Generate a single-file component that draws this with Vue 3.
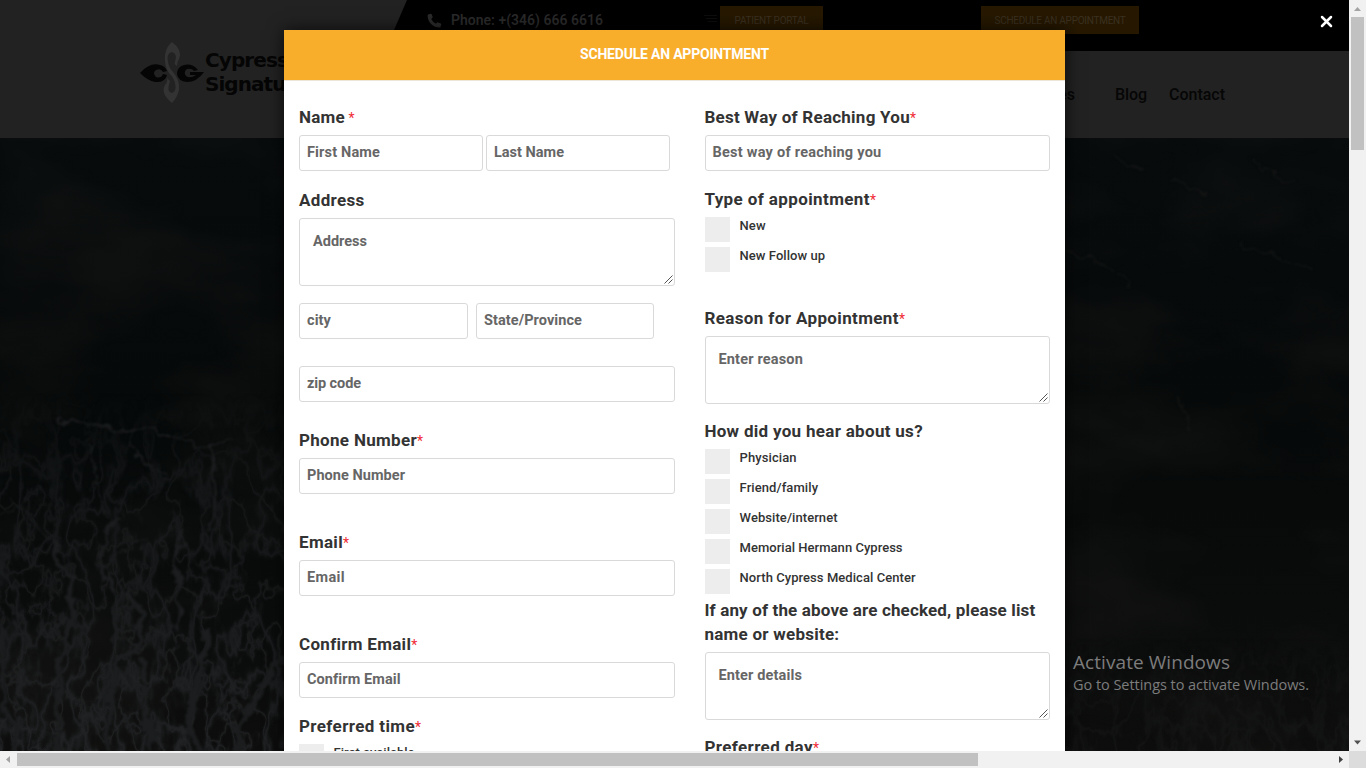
<script setup>
// Adjusts tracking so a text run spans the requested width in pixels.
const vFit = {
  mounted(el, { value }) {
    if (!value) return
    const n = [...el.textContent].length
    const w = el.getBoundingClientRect().width
    el.style.letterSpacing = `${(value - w) / n}px`
  },
}

const left = [
  { id: 'name', label: 'Name', w: 46, req: true, spaced: true, rows: [[{ t: 'First Name', w: 73, box: 'w184' }, { t: 'Last Name', w: 70, box: 'w184' }]] },
  { id: 'address', label: 'Address', w: 65.5, area: { t: 'Address', w: 54 } },
  { id: 'place', rows: [[{ t: 'city', w: 24, box: 'w169' }, { t: 'State/Province', w: 98, box: 'w178' }]] },
  { id: 'zip', rows: [[{ t: 'zip code', w: 54, box: 'full' }]] },
  { id: 'phone', label: 'Phone Number', w: 118, req: true, rows: [[{ t: 'Phone Number', w: 98, box: 'full' }]] },
  { id: 'email', label: 'Email', w: 44, req: true, rows: [[{ t: 'Email', w: 38, box: 'full' }]] },
  { id: 'confirm', label: 'Confirm Email', w: 112, req: true, rows: [[{ t: 'Confirm Email', w: 93.5, box: 'full' }]] },
  { id: 'time', label: 'Preferred time', w: 116, req: true, checks: [{ t: 'First available', w: 81 }] },
]
const right = [
  { id: 'reach', label: 'Best Way of Reaching You', w: 205.5, req: true, rows: [[{ t: 'Best way of reaching you', w: 169, box: 'full' }]] },
  { id: 'type', label: 'Type of appointment', w: 165.5, req: true, checks: [{ t: 'New', w: 26 }, { t: 'New Follow up', w: 85.5 }] },
  { id: 'reason', label: 'Reason for Appointment', w: 194.5, req: true, area: { t: 'Enter reason', w: 84.5 } },
  {
    id: 'hear', label: 'How did you hear about us?', w: 218.5,
    checks: [{ t: 'Physician', w: 57 }, { t: 'Friend/family', w: 78.5 }, { t: 'Website/internet', w: 98 }, { t: 'Memorial Hermann Cypress', w: 163 }, { t: 'North Cypress Medical Center', w: 176 }],
  },
  { id: 'details', label: 'If any of the above are checked, please list', w: 331, label2: 'name or website:', w2: 135, area: { t: 'Enter details', w: 83.5 } },
  { id: 'day', label: 'Preferred day', w: 108.5, req: true },
]
</script>

<template>
  <div class="window">
    <div class="page">
      <header class="header">
        <svg class="topbar" width="1349" height="51" viewBox="0 0 1349 51"><path d="M407 0H1349V51H385Z" fill="#000" /></svg>
        <div class="contact">
          <svg width="15" height="15" viewBox="0 0 15 15"><path d="M1.2 1.6 3.7.7Q4.4.6 4.7 1.3L5.7 4Q5.9 4.7 5.3 5.1L4.2 6Q5.8 9.2 9 10.8L9.9 9.700Q10.4 9.1 11 9.4L13.8 10.5Q14.4 10.8 14.3 11.5L13.5 13.900Q13.3 14.5 12.6 14.5C6 14.5.6 9 .6 2.4Q.6 1.8 1.2 1.6Z" fill="#2a2a2a" /></svg>
          <span v-fit="152" class="tel">Phone: +(346) 666 6616</span>
        </div>
        <svg class="lines" width="14" height="7" viewBox="0 0 14 7"><path d="M0 .5H13M2 3.5H13M4 6.5H13" stroke="#0d0d0d" /></svg>
        <div class="cta portal"><span v-fit="74">PATIENT PORTAL</span></div>
        <div class="cta schedule"><span v-fit="131">SCHEDULE AN APPOINTMENT</span></div>
        <div class="logo">
          <svg width="64" height="62" viewBox="0 0 64 62">
            <path d="M32 0Q43 8 39 17Q37 20 37 24L34.500 22Q38 11 32 10Q26 11 28 20Q29 26 33 30Q40 38 39 48Q37 56 32 61Q20 51 25 43Q28 40 27 36L30 39Q26 50 32 51Q37 49 35 41Q34 36 29 31Q24 24 25 13Q26 5 32 0Z" fill="#333" />
            <path d="M0 31Q10 20 20 23Q25 24 27 29L23 30Q21 26 16 28Q12 31 16 35Q21 37 23 32L27 33Q25 41 15 40Q8 39 0 31Z" fill="#050505" />
            <path d="M64 30 50 30V33H56Q50 37 46 34Q43 30 47 27Q52 26 54 29L58 28Q52 21 44 23Q37 25 37 32Q38 39 47 40Q57 40 64 30Z" fill="#050505" />
          </svg>
          <div class="brand"><span v-fit="83">Cypress</span><span v-fit="102">Signature</span></div>
        </div>
        <nav class="nav"><span>Services</span><span v-fit="32">Blog</span><span v-fit="56">Contact</span></nav>
      </header>
      <svg class="sea" width="1349" height="613" viewBox="0 0 1349 613">
        <defs>
          <linearGradient id="depth" x1="0" y1="0" x2="0" y2="1">
            <stop offset="0" stop-color="#070b0c" /><stop offset=".45" stop-color="#060909" /><stop offset="1" stop-color="#0d0d0d" />
          </linearGradient>
          <filter id="foam" x="0" y="0" width="100%" height="100%" color-interpolation-filters="sRGB">
            <feTurbulence type="fractalNoise" baseFrequency=".034 .022" numOctaves="4" seed="8" />
            <feColorMatrix values="0 0 0 0 .14  0 0 0 0 .147  0 0 0 0 .153  1 0 0 0 0" />
            <feComponentTransfer><feFuncA type="table" tableValues="0 0 0 0 0 0 0 0 0 .15 .8 .15 0 0 0 0 0 0 0 0 0" /></feComponentTransfer>
          </filter>
          <filter id="foam2" x="0" y="0" width="100%" height="100%" color-interpolation-filters="sRGB">
            <feTurbulence type="fractalNoise" baseFrequency=".026 .012" numOctaves="4" seed="21" />
            <feColorMatrix values="0 0 0 0 .135  0 0 0 0 .142  0 0 0 0 .148  0 1 0 0 0" />
            <feComponentTransfer><feFuncA type="table" tableValues="0 0 0 0 0 0 0 0 0 .2 .9 .2 0 0 0 0 0 0 0 0 0" /></feComponentTransfer>
          </filter>
          <filter id="haze" x="0" y="0" width="100%" height="100%" color-interpolation-filters="sRGB">
            <feTurbulence type="fractalNoise" baseFrequency=".006 .012" numOctaves="4" seed="3" />
            <feColorMatrix values="0 0 0 0 .09  0 0 0 0 .09  0 0 0 0 .085  2.6 0 0 0 -1.05" />
          </filter>
          <filter id="soft" filterUnits="userSpaceOnUse" x="0" y="0" width="1349" height="613" color-interpolation-filters="sRGB">
            <feTurbulence type="fractalNoise" baseFrequency=".06" numOctaves="3" seed="5" result="n" />
            <feDisplacementMap in="SourceGraphic" in2="n" scale="18" xChannelSelector="R" yChannelSelector="G" />
            <feGaussianBlur stdDeviation=".9" />
          </filter>
          <linearGradient id="rise" x1="0" y1="0" x2="0" y2="1"><stop offset="0" stop-color="#000" /><stop offset=".25" stop-color="#777" /><stop offset="1" stop-color="#fff" /></linearGradient>
          <mask id="low"><rect y="255" width="290" height="358" fill="url(#rise)" /><rect x="1060" y="500" width="289" height="113" fill="url(#rise)" opacity=".35" /></mask>
        </defs>
        <rect width="1349" height="613" fill="url(#depth)" />
        <rect width="1349" height="613" filter="url(#haze)" opacity=".45" />
        <g mask="url(#low)"><rect width="1349" height="613" filter="url(#foam)" /><rect width="1349" height="613" filter="url(#foam2)" /></g>
        <g fill="none" stroke="#1b1d1e" stroke-linecap="round" stroke-linejoin="round" filter="url(#soft)">
          <path d="M58 283Q90 286 125 294Q150 285 170 299Q188 307 210 307Q222 305 232 303" stroke-width="2" />
          <path d="M210 308Q216 330 214 360L208 392M181 390Q174 420 179 450L178 490M118 380Q98 400 100 430Q118 452 116 475L112 500" stroke-width="3.500" />
          <path d="M0 382 22 367 42 350M22 367Q38 394 52 404M130 305Q140 330 165 336L155 358M90 300Q94 325 98 350L106 382M110 418Q130 410 147 398" stroke-width="1.500" />
          <path d="M52 404Q58 422 72 442Q74 480 66 500L58 560V613M205 488Q202 550 188 575Q186 590 202 613M130 455Q146 485 138 510Q114 520 112 550L108 613M0 490Q10 545 2 570Q18 585 16 613M140 520Q142 555 152 613M278 520Q255 560 238 590V613" stroke-width="6" />
        </g>
        <g fill="none" stroke="#131514" stroke-width="1.500" stroke-linecap="round" filter="url(#soft)">
          <path d="M1115 18 1142 34M1170 38 1203 56M1256 18Q1270 38 1292 47M1068 114 1114 132M1244 104Q1260 116 1310 130M1120 136 1129 148M1180 262 1190 290" />
        </g>
      </svg>

      <section class="modal">
        <h1 class="title"><span v-fit="189">SCHEDULE AN APPOINTMENT</span></h1>
        <form class="form">
          <div v-for="(col, i) in [left, right]" :key="i" class="col" :class="i ? 'col-right' : 'col-left'">
            <div v-for="g in col" :key="g.id" class="group" :class="g.id">
              <div v-if="g.label" class="label" :class="{ spaced: g.spaced }">
                <span v-fit="g.w">{{ g.label }}</span><b v-if="g.req" class="star">*</b>
                <template v-if="g.label2"><br><span v-fit="g.w2">{{ g.label2 }}</span></template>
              </div>
              <div v-for="(row, r) in g.rows" :key="r" class="row">
                <div v-for="f in row" :key="f.t" class="input" :class="f.box"><span v-fit="f.w">{{ f.t }}</span></div>
              </div>
              <div v-if="g.area" class="area">
                <span v-fit="g.area.w">{{ g.area.t }}</span>
                <svg class="grip" width="9" height="9" viewBox="0 0 9 9"><path d="M.5 8.5 8.5 .5M4.5 8.5 8.5 4.5" stroke="#555" /></svg>
              </div>
              <div v-if="g.checks" class="checks">
                <div v-for="c in g.checks" :key="c.t" class="check"><i /><span v-fit="c.w">{{ c.t }}</span></div>
              </div>
            </div>
          </div>
        </form>
      </section>

      <svg class="close" width="13" height="13" viewBox="0 0 13 13"><path d="M2 2 11 11M11 2 2 11" stroke="#fff" stroke-width="2.5" stroke-linecap="round" /></svg>
      <div class="activate">
        <div class="big"><span v-fit="157">Activate Windows</span></div>
        <div class="small"><span v-fit="236">Go to Settings to activate Windows.</span></div>
      </div>
    </div>

    <div class="bar vertical">
      <svg width="17" height="17" viewBox="0 0 17 17"><path d="M5 11 8.5 7 12 11Z" fill="#a3a3a3" /></svg>
      <div class="thumb" />
      <svg class="end" width="17" height="17" viewBox="0 0 17 17"><path d="M5 6.5 8.5 10.500 12 6.500Z" fill="#505050" /></svg>
    </div>
    <div class="bar horizontal">
      <svg width="17" height="17" viewBox="0 0 17 17"><path d="M10 5 6 8.500 10 12Z" fill="#a3a3a3" /></svg>
      <div class="thumb" />
      <svg class="end" width="17" height="17" viewBox="0 0 17 17"><path d="M7 5 11 8.500 7 12Z" fill="#404040" /></svg>
    </div>
    <div class="corner" />
  </div>
</template>

<style>
html, body { margin: 0; overflow: hidden; }
</style>

<style scoped>
* { box-sizing: border-box; }
.window { display: grid; grid-template: 751px 17px / 1349px 17px; width: 1366px; height: 768px; font-family: Roboto, "Liberation Sans", sans-serif; }
.window span { white-space: nowrap; }
.page { position: relative; overflow: hidden; background: #070a0a; }
svg { display: block; flex: none; }
.header { position: relative; height: 138px; background: #222; }
.topbar { position: absolute; top: 0; left: 0; }
.contact { position: absolute; left: 427px; top: 12px; height: 16px; display: flex; align-items: center; gap: 9px; font-size: 14px; font-weight: 600; color: #2a2a2a; }
.lines { position: absolute; left: 704px; top: 15px; }
.cta { position: absolute; top: 6px; height: 28px; display: flex; align-items: center; justify-content: center; background: #261800; color: #3a3020; font-size: 10px; }
.portal { left: 720px; width: 103px; }
.schedule { left: 981px; width: 158px; }
.logo { position: absolute; left: 140px; top: 42px; display: flex; gap: 1px; }
.brand { display: flex; flex-direction: column; align-items: flex-start; padding-top: 6px; font: bold 20px/24px "DejaVu Sans", sans-serif; color: #050505; }
.nav { position: absolute; right: 124px; top: 84px; display: flex; gap: 22px; font-size: 16px; line-height: 22px; font-weight: 500; color: #060606; }
.nav span:first-child { margin-right: 18px; }
.modal { position: absolute; left: 284px; top: 30px; width: 781px; height: 740px; background: #fff; box-shadow: 0 0 16px rgba(0, 0, 0, .7); }
.title { margin: 0; height: 51px; padding-top: 14px; text-align: center; background: #f9ae2b; border-bottom: 1px solid #ece5d8; color: #fff; font-size: 14px; line-height: 20px; font-weight: 700; padding-right: 3px; padding-left: 3px; }
.title span { display: inline-block; }
.form { display: flex; gap: 30px; padding: 24px 15px 0; }
.col-left { width: 376px; }
.col-right { width: 345px; }
.label { font-size: 17px; line-height: 24px; font-weight: 700; color: #333; margin-bottom: 6px; white-space: nowrap; }
.col-right .label { margin-left: -.6px; }
.star { font-size: 14px; line-height: 20px; font-weight: 400; color: #f02b35; }
.spaced .star { margin-left: 3.5px; }
.row { display: flex; gap: 3px; }
.input { height: 36px; padding: 0 7px; border: 1px solid #d9d9d9; border-radius: 3px; font-size: 14.5px; line-height: 33px; font-weight: 700; color: #666; }
.col-right .input { padding-left: 6.500px; }
.w184 { width: 184px; }
.w169 { width: 169px; }
.w178 { width: 178px; }
.full { width: 100%; }
.area { position: relative; height: 68px; padding: 13px 13px; border: 1px solid #d9d9d9; border-radius: 3px; font-size: 14.5px; line-height: 20px; font-weight: 700; color: #666; }
.col-right .area { padding-left: 12.500px; }
.grip { position: absolute; right: 1px; bottom: 1px; }
.check { display: flex; gap: 9.600px; height: 25px; margin-bottom: 5px; font-size: 13px; line-height: 17px; font-weight: 500; color: #333; }
.check i { width: 25px; height: 25px; background: #ededed; }
.address, .place { margin-top: 17px; }
.place .row { gap: 8px; }
.zip { margin-top: 27px; }
.phone { margin-top: 26px; }
.email, .confirm { margin-top: 36px; }
.time, .type { margin-top: 16px; }
.reason { margin-top: 34px; }
.hear { margin-top: 15px; }
.details { margin-top: -1px; }
.day { margin-top: 15px; }
.sea { height: 613px; }
.close { position: absolute; left: 1320px; top: 15px; }
.activate { position: absolute; left: 1073px; top: 650px; color: #7c7c7c; font-family: "Open Sans", "Noto Sans", sans-serif; font-weight: 400; }
.big { font-size: 19px; line-height: 24px; }
.small { font-size: 14.5px; line-height: 21px; }
.bar { display: flex; background: #f1f1f1; }
.vertical { flex-direction: column; align-items: center; }
.bar .thumb { background: #c1c1c1; flex: none; }
.vertical .thumb { width: 13px; height: 133px; }
.horizontal { align-items: center; }
.horizontal .thumb { width: 961px; height: 13px; }
.vertical .end { margin-top: auto; }
.horizontal .end { margin-left: auto; }
.corner { background: #dcdcdc; }
</style>
